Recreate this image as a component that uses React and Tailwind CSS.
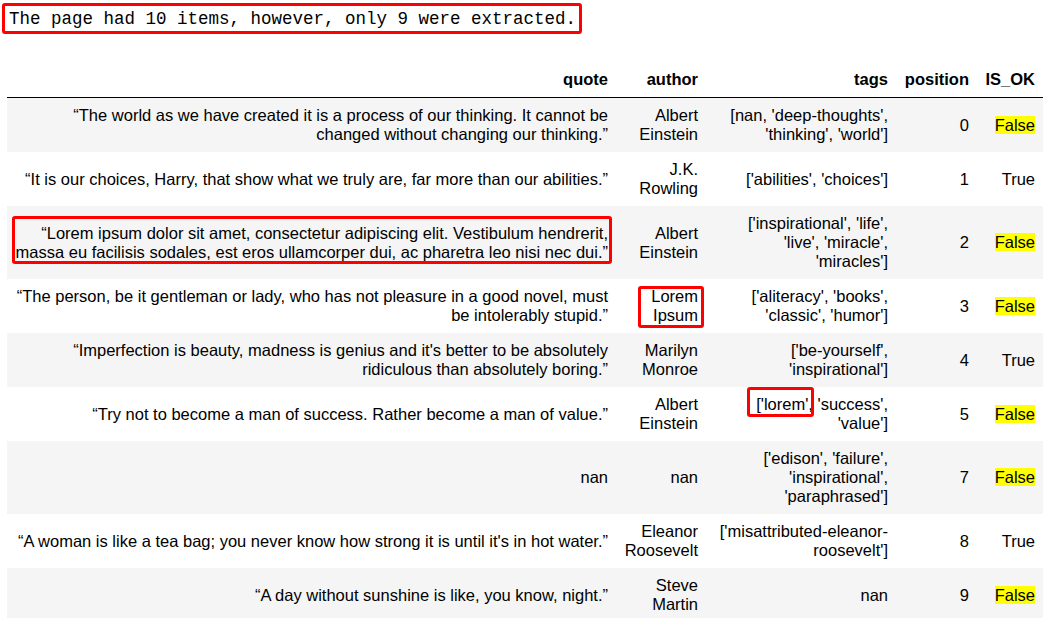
import React from "react";

const rows = [
  {
    quote: ["“The world as we have created it is a process of our thinking. It cannot be", "changed without changing our thinking.”"],
    author: ["Albert", "Einstein"],
    tags: ["[nan, 'deep-thoughts',", "'thinking', 'world']"],
    position: 0,
    ok: false,
  },
  {
    quote: ["“It is our choices, Harry, that show what we truly are, far more than our abilities.”"],
    author: ["J.K.", "Rowling"],
    tags: ["['abilities', 'choices']"],
    position: 1,
    ok: true,
  },
  {
    quote: ["“Lorem ipsum dolor sit amet, consectetur adipiscing elit. Vestibulum hendrerit,", "massa eu facilisis sodales, est eros ullamcorper dui, ac pharetra leo nisi nec dui.”"],
    quoteBox: true,
    author: ["Albert", "Einstein"],
    tags: ["['inspirational', 'life',", "'live', 'miracle',", "'miracles']"],
    position: 2,
    ok: false,
  },
  {
    quote: ["“The person, be it gentleman or lady, who has not pleasure in a good novel, must", "be intolerably stupid.”"],
    author: ["Lorem", "Ipsum"],
    authorBox: true,
    tags: ["['aliteracy', 'books',", "'classic', 'humor']"],
    position: 3,
    ok: false,
  },
  {
    quote: ["“Imperfection is beauty, madness is genius and it's better to be absolutely", "ridiculous than absolutely boring.”"],
    author: ["Marilyn", "Monroe"],
    tags: ["['be-yourself',", "'inspirational']"],
    position: 4,
    ok: true,
  },
  {
    quote: ["“Try not to become a man of success. Rather become a man of value.”"],
    author: ["Albert", "Einstein"],
    tags: null,
    position: 5,
    ok: false,
  },
  {
    quote: ["nan"],
    author: ["nan"],
    tags: ["['edison', 'failure',", "'inspirational',", "'paraphrased']"],
    position: 7,
    ok: false,
  },
  {
    quote: ["“A woman is like a tea bag; you never know how strong it is until it's in hot water.”"],
    author: ["Eleanor", "Roosevelt"],
    tags: ["['misattributed-eleanor-", "roosevelt']"],
    position: 8,
    ok: true,
  },
  {
    quote: ["“A day without sunshine is like, you know, night.”"],
    author: ["Steve", "Martin"],
    tags: ["nan"],
    position: 9,
    ok: false,
  },
];

const Lines = ({ lines }) =>
  lines.map((line, i) => (
    <React.Fragment key={i}>
      {i > 0 && <br />}
      {line}
    </React.Fragment>
  ));

const cell = "px-2 py-2 text-right align-middle whitespace-nowrap";

export default function App() {
  return (
    <div className="h-[618px] w-[1043px] overflow-hidden bg-white text-black font-['Liberation_Sans',Arial,sans-serif]">
      <div className="pt-[3px] pl-[2px]">
        <div className="inline-block border-[3px] border-[#ff0000] rounded-[3px] pl-[4px] pr-[3px] pt-[1px] font-['Liberation_Mono','DejaVu_Sans_Mono',monospace] text-[17.5px] leading-[24px]">
          The page had 10 items, however, only 9 were extracted.
        </div>
      </div>

      <table className="mt-[28px] ml-[7px] table-fixed border-collapse text-[16.5px] leading-[19px]">
        <colgroup>
          <col className="w-[609px]" />
          <col className="w-[90px]" />
          <col className="w-[190px]" />
          <col className="w-[81px]" />
          <col className="w-[66px]" />
        </colgroup>
        <thead>
          <tr className="border-b border-black font-bold">
            <th className={cell}>quote</th>
            <th className={cell}>author</th>
            <th className={cell}>tags</th>
            <th className={cell}>position</th>
            <th className={cell}>IS_OK</th>
          </tr>
        </thead>
        <tbody>
          {rows.map((row, i) => (
            <tr key={i} className={i % 2 === 0 ? "bg-[#f5f5f5]" : "bg-white"}>
              <td className={cell}>
                {row.quoteBox ? (
                  <span className="relative inline-block">
                    <Lines lines={row.quote} />
                    <span className="absolute -left-[4px] -right-[4px] -top-[8px] -bottom-[2px] border-[3px] border-[#ff0000] rounded-[3px]" />
                  </span>
                ) : (
                  <Lines lines={row.quote} />
                )}
              </td>
              <td className={cell}>
                {row.authorBox ? (
                  <span className="relative inline-block">
                    <Lines lines={row.author} />
                    <span className="absolute -left-[13px] -right-[6px] -top-[1px] -bottom-[3px] border-[3px] border-[#ff0000] rounded-[3px]" />
                  </span>
                ) : (
                  <Lines lines={row.author} />
                )}
              </td>
              <td className={cell}>
                {row.tags ? (
                  <Lines lines={row.tags} />
                ) : (
                  <>
                    <span className="relative inline-block">
                      ['lorem'
                      <span className="absolute -left-[9px] -right-[6px] -top-[8px] -bottom-[3px] border-[3px] border-[#ff0000] rounded-[3px]" />
                    </span>
                    , 'success',
                    <br />
                    'value']
                  </>
                )}
              </td>
              <td className={cell}>{row.position}</td>
              <td className={cell}>
                {row.ok ? "True" : <span className="bg-[#ffff00]">False</span>}
              </td>
            </tr>
          ))}
        </tbody>
      </table>
    </div>
  );
}
